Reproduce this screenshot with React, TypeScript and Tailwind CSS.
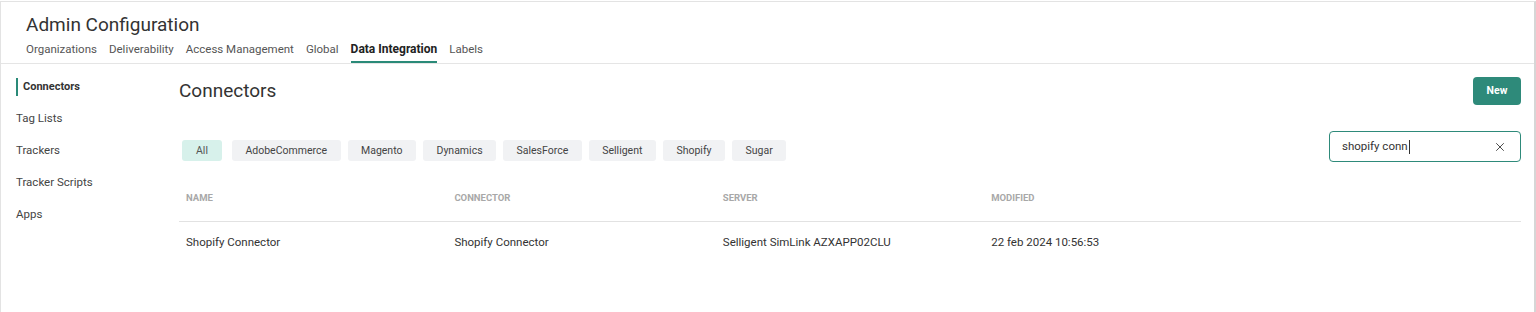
import { X } from 'lucide-react'

const tabs = ['Organizations', 'Deliverability', 'Access Management', 'Global', 'Data Integration', 'Labels']
const sideItems = ['Connectors', 'Tag Lists', 'Trackers', 'Tracker Scripts', 'Apps']
const filters = ['All', 'AdobeCommerce', 'Magento', 'Dynamics', 'SalesForce', 'Selligent', 'Shopify', 'Sugar']

const rows = [
  {
    name: 'Shopify Connector',
    connector: 'Shopify Connector',
    server: 'Selligent SimLink AZXAPP02CLU',
    modified: '22 feb 2024 10:56:53',
  },
]

export default function App() {
  return (
    <div className="h-[312px] w-[1536px] overflow-hidden bg-white font-['Roboto',sans-serif] text-[#333]">
      <div className="h-full mt-px border-t border-l border-r-2 border-[#e3e3e3] border-r-[#d6d6d6]">
        {/* header */}
        <div className="border-b border-[#e5e5e5] pl-[25px]">
          <h1 className="pt-[10px] text-[19px] leading-[26px] text-[#333]">Admin Configuration</h1>
          <div className="mt-[3px] flex gap-[12px]">
            {tabs.map((t) => (
              <div
                key={t}
                className={`border-b-2 pb-[4px] leading-[16px] ${
                  t === 'Data Integration'
                    ? 'border-[#2a8a78] text-[12px] font-bold text-[#222]'
                    : 'border-transparent text-[11.5px] text-[#555]'
                }`}
              >
                {t}
              </div>
            ))}
          </div>
        </div>

        <div className="flex">
          {/* sidebar */}
          <div className="w-[178px] shrink-0 pl-[15px] pt-[7px]">
            {sideItems.map((s) => (
              <div key={s} className="flex h-[32px] items-center">
                {s === 'Connectors' ? (
                  <div className="flex h-[18px] items-center border-l-2 border-[#2a8a78] pl-[5px] text-[11px] font-bold text-[#333]">
                    {s}
                  </div>
                ) : (
                  <div className="text-[11.5px] text-[#444]">{s}</div>
                )}
              </div>
            ))}
          </div>

          {/* main */}
          <div className="flex-1 pr-[13px]">
            <div className="flex items-start justify-between pt-[13px]">
              <h2 className="pt-[2px] text-[19px] leading-[24px] text-[#333]">Connectors</h2>
              <button className="h-[28px] w-[48px] rounded bg-[#2e8a7a] text-[10.5px] font-bold text-white">
                New
              </button>
            </div>

            <div className="mt-[26px] flex items-start justify-between">
              <div className="flex gap-[7px] pl-[3px] pt-[9px]">
                {filters.map((f) => (
                  <div
                    key={f}
                    className={`flex h-[21px] items-center rounded-[3px] text-[10.5px] ${
                      f === 'All' ? 'mr-[3px] bg-[#d7f1eb] px-[14px] text-[#555]' : 'bg-[#f1f2f4] px-[13.5px] text-[#444]'
                    }`}
                  >
                    {f}
                  </div>
                ))}
              </div>
              <div className="flex h-[31px] w-[192px] items-center justify-between rounded border border-[#2e8a7a] pl-[12px] pr-[13px]">
                <span className="flex items-center text-[11.5px] text-[#333]">
                  shopify conn<span className="ml-px inline-block h-[14px] w-px bg-[#333]" />
                </span>
                <X size={14} strokeWidth={1.5} className="text-[#333]" />
              </div>
            </div>

            {/* table */}
            <div className="mt-[14px]">
              <div className="grid h-[46px] grid-cols-5 items-center border-b border-[#e2e2e2] text-[9.5px] font-bold text-[#a8a8a8]">
                <div className="pl-[7px]">NAME</div>
                <div className="pl-[7px]">CONNECTOR</div>
                <div className="pl-[7px]">SERVER</div>
                <div className="pl-[7px]">MODIFIED</div>
                <div />
              </div>
              {rows.map((r) => (
                <div key={r.name} className="grid h-[42px] grid-cols-5 items-center text-[11.5px] text-[#333]">
                  <div className="pl-[7px]">{r.name}</div>
                  <div className="pl-[7px]">{r.connector}</div>
                  <div className="pl-[7px]">{r.server}</div>
                  <div className="pl-[7px]">{r.modified}</div>
                  <div />
                </div>
              ))}
            </div>
          </div>
        </div>
      </div>
    </div>
  )
}
